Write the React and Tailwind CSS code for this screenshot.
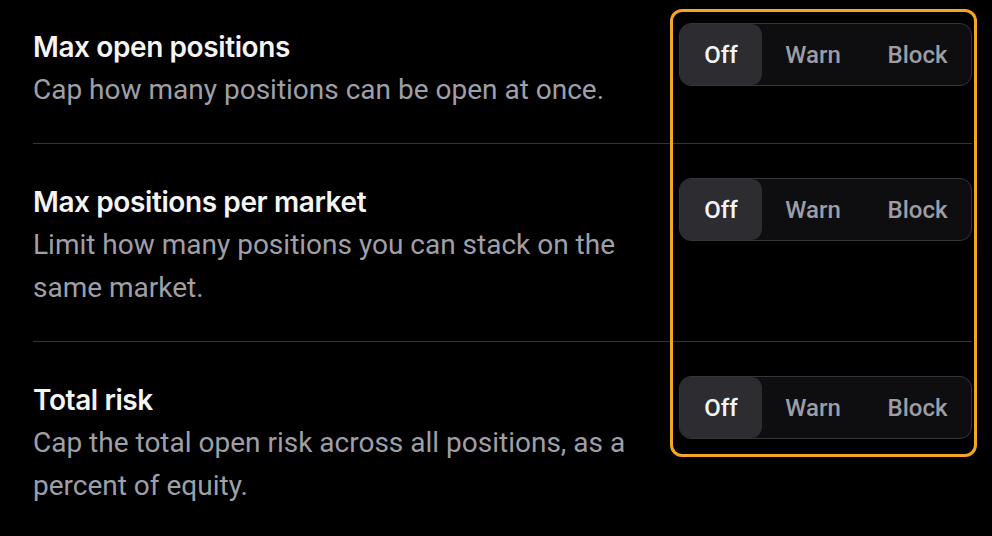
import React from "react";

const rows = [
  {
    title: "Max open positions",
    desc: "Cap how many positions can be open at once.",
  },
  {
    title: "Max positions per market",
    desc: "Limit how many positions you can stack on the same market.",
  },
  {
    title: "Total risk",
    desc: "Cap the total open risk across all positions, as a percent of equity.",
  },
];

function Segmented() {
  return (
    <div className="flex h-[63px] w-[293px] shrink-0 items-stretch rounded-[12px] border border-[#35353b] bg-[#0e0e10] font-['Roboto',sans-serif] text-[24px] font-medium">
      <div className="flex w-[82px] items-center justify-center rounded-[11px] bg-[#2c2c31] text-[#f4f4f5]">
        Off
      </div>
      <div className="flex w-[102px] items-center justify-center text-[#9d9da6]">
        Warn
      </div>
      <div className="flex flex-1 items-center justify-center text-[#9d9da6]">
        Block
      </div>
    </div>
  );
}

export default function App() {
  return (
    <div className="relative h-[536px] w-[992px] overflow-hidden bg-black">
      <div className="flex flex-col pl-[33px] pr-[20px]">
        {rows.map((r, i) => (
          <div
            key={r.title}
            className={
              "flex items-start justify-between " +
              (i === 0 ? "pt-[23px]" : "pt-[34px]") +
              " pb-[32px]" +
              (i < rows.length - 1 ? " border-b border-[#333338]" : "")
            }
          >
            <div className="w-[620px] pt-[6px]">
              <div className="font-['Inter',sans-serif] text-[28px] font-semibold leading-[36px] tracking-[-0.4px] text-[#f4f4f5]">
                {r.title}
              </div>
              <div className="mt-[3px] font-['Roboto',sans-serif] text-[28px] leading-[43px] text-[#9f9fa7]">
                {r.desc}
              </div>
            </div>
            <Segmented />
          </div>
        ))}
      </div>
      <div className="pointer-events-none absolute left-[670px] top-[9px] h-[448px] w-[307px] rounded-[12px] border-[3px] border-[#f5a524]" />
    </div>
  );
}
